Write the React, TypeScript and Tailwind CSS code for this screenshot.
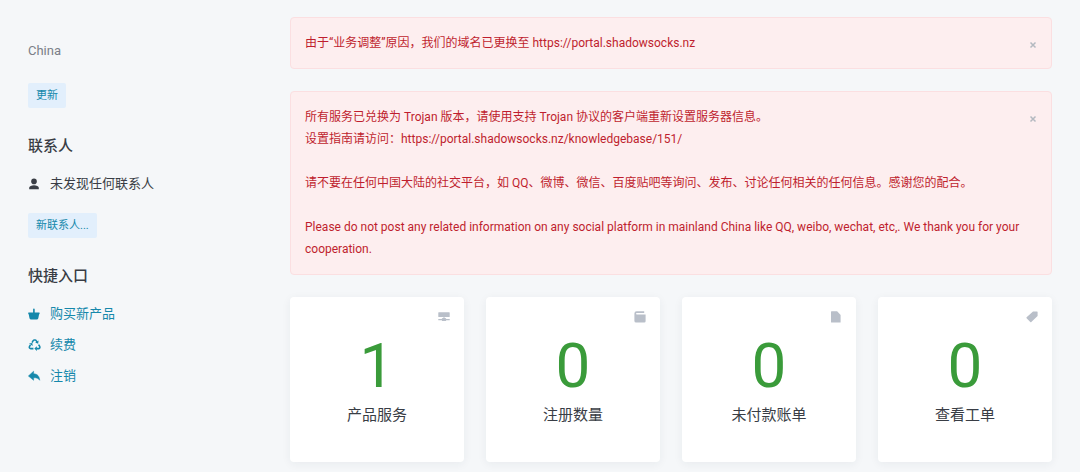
import React, { useState } from "react";

type IconProps = { className?: string };

const PersonIcon = ({ className }: IconProps) => (
  <svg viewBox="0 0 12 12" className={className} fill="currentColor" aria-hidden="true">
    <circle cx="6" cy="3.4" r="2.8" />
    <path d="M1.200 11.200V9.800C1.200 8 3.600 7.200 6 7.200s4.800.8 4.800 2.600v1.400z" />
  </svg>
);

const BasketIcon = ({ className }: IconProps) => (
  <svg viewBox="0 0 14 12" className={className} fill="currentColor" aria-hidden="true">
    <path d="M5.100 1.200a.8.8 0 0 1 1.600 0v3.300H11.200a.5.5 0 0 1 .5.6l-.3 1.200H.5L.1 5.100a.5.5 0 0 1 .5-.6h4.500zM.7 6.300h10.400l-.8 4a1.700 1.700 0 0 1-1.600 1.300H3.100a1.700 1.700 0 0 1-1.600-1.300z" />
  </svg>
);

const RecycleIcon = ({ className }: IconProps) => (
  <svg viewBox="0 0 14 13" className={className} fill="none" stroke="currentColor" strokeWidth="1.7" aria-hidden="true">
    <path d="M3.800 3.900 5 1.800Q5.500 1.100 6.300 1.100h.8q.8 0 1.200.7l.8 1.300" />
    <path d="m10.900 6 1.200 2.100q.5.900 0 1.600t-1.200.7H8.600" />
    <path d="M5.300 10.400H2.400q-1 0-1.400-.7t0-1.500l1-1.800" />
    <path d="m10.900 1.700-.5 3.500-3.200-1.400zM9 7.800v5.200L6.300 10.400zM.5 4.900l3.600-.6.4 3.400z" fill="currentColor" stroke="none" />
  </svg>
);

const ReplyIcon = ({ className }: IconProps) => (
  <svg viewBox="0 0 14 12" className={className} fill="currentColor" aria-hidden="true">
    <path d="M5.600 1.200v2.500c3.800.2 5.800 2.400 6.100 6.600C10.300 8.300 8.700 7.700 5.600 7.700v2.600L.4 6z" stroke="currentColor" strokeWidth=".5" strokeLinejoin="round" />
  </svg>
);

const ServerIcon = ({ className }: IconProps) => (
  <svg viewBox="0 0 12 12" className={className} fill="currentColor" aria-hidden="true">
    <path d="M.8 1.200h10.400a.500.500 0 0 1 .5.500v3.800a.500.500 0 0 1-.5.500H.8a.500.500 0 0 1-.5-.5V1.700a.500.500 0 0 1 .5-.5zM5.500 6h1v1.200h-1zM.3 7.900h3.400q.3-.9 1.200-.9h2.200q.9 0 1.200.9h3.400v1.300H8.300q-.3.9-1.200.9H4.900q-.9 0-1.200-.9H.3z" />
  </svg>
);

const WalletIcon = ({ className }: IconProps) => (
  <svg viewBox="0 0 12 12" className={className} fill="currentColor" aria-hidden="true">
    <path d="M2.600.3h7.600v1.700H2.900q-.9 0-.9.8t.9.8h8.700v6.700q0 1.300-1.300 1.300H2.100Q.4 11.600.4 10V2.500Q.4.3 2.600.3z" />
  </svg>
);

const FileIcon = ({ className }: IconProps) => (
  <svg viewBox="0 0 12 12" className={className} fill="currentColor" aria-hidden="true">
    <path d="M1.500.3h5.600l3.500 3.600v7.200q0 .5-.5.500H1.500q-.5 0-.5-.5V.8q0-.5.5-.5z" />
  </svg>
);

const TagIcon = ({ className }: IconProps) => (
  <svg viewBox="0 0 12 12" className={className} fill="currentColor" aria-hidden="true">
    <path d="M7 .4h4q.6 0 .6.600v4L5.300 11.100q-.5.5-1 0L.6 7.300q-.5-.5 0-1z" />
  </svg>
);

const Alert = ({ children }: { children: React.ReactNode }) => {
  const [open, setOpen] = useState(true);
  if (!open) return null;
  return (
    <div role="alert" className="flex items-start justify-between rounded border border-[#fbdfe1] bg-[#fdeeef] py-3.5 pr-[13px] pl-3.5 text-[12px] leading-[22px] text-[#bf1e2e]">
      <div className="min-w-0 flex-1 pr-1">{children}</div>
      <button type="button" aria-label="关闭" onClick={() => setOpen(false)} className="mt-2 flex size-2.5 items-center justify-center text-[#b4b9c0]">
        <svg viewBox="0 0 10 10" className="size-2.5" stroke="currentColor" strokeWidth="1.5" aria-hidden="true">
          <path d="m2.500 2.500 5 5m0-5-5 5" />
        </svg>
      </button>
    </div>
  );
};

const links = [
  { label: "购买新产品", Icon: BasketIcon },
  { label: "续费", Icon: RecycleIcon },
  { label: "注销", Icon: ReplyIcon },
];

const stats = [
  { value: 1, label: "产品服务", Icon: ServerIcon },
  { value: 0, label: "注册数量", Icon: WalletIcon },
  { value: 0, label: "未付款账单", Icon: FileIcon },
  { value: 0, label: "查看工单", Icon: TagIcon },
];

export default function App() {
  return (
    <div className="flex min-h-screen gap-[22px] bg-[#f5f7f9] px-7 font-[Roboto,'Noto_Sans_CJK_SC',sans-serif] text-[#393d45]">
      <aside className="flex w-60 shrink-0 flex-col items-start pt-[41px] text-[13px] leading-5">
        <p className="text-[#7b7f88]">China</p>
        <button type="button" className="mt-[22px] h-[25px] rounded-xs bg-[#e2effc] px-2 text-[11px] text-[#1588ab]">更新</button>

        <h2 className="mt-[26px] text-[15px] leading-6 font-medium">联系人</h2>
        <p className="mt-4 flex items-center gap-2.5">
          <PersonIcon className="size-3" />
          未发现任何联系人
        </p>
        <button type="button" className="mt-[19px] h-[25px] rounded-xs bg-[#e2effc] px-2 text-[11px] text-[#1588ab]">新联系人...</button>

        <h2 className="mt-[26px] text-[15px] leading-6 font-medium">快捷入口</h2>
        <nav className="mt-4 flex flex-col gap-[11px] text-[#1588ab]">
          {links.map(({ label, Icon }) => (
            <a key={label} href="#" className="flex items-center gap-2">
              <Icon className="h-3 w-3.5" />
              {label}
            </a>
          ))}
        </nav>
      </aside>

      <main className="flex min-w-0 flex-1 flex-col gap-[22px] pt-[17px]">
        <Alert>由于“业务调整”原因，我们的域名已更换至 https://portal.shadowsocks.nz</Alert>
        <Alert>
          <p>所有服务已兑换为 Trojan 版本，请使用支持 Trojan 协议的客户端重新设置服务器信息。</p>
          <p>设置指南请访问：https://portal.shadowsocks.nz/knowledgebase/151/</p>
          <br />
          <p>请不要在任何中国大陆的社交平台，如 QQ、微博、微信、百度贴吧等询问、发布、讨论任何相关的任何信息。感谢您的配合。</p>
          <br />
          <p>Please do not post any related information on any social platform in mainland China like QQ, weibo, wechat, etc,. We thank you for your cooperation.</p>
        </Alert>

        <section className="grid grid-cols-4 gap-[22px]">
          {stats.map(({ value, label, Icon }) => (
            <a key={label} href="#" className="flex flex-col rounded bg-white px-3.5 pt-3.5 pb-[35px] shadow-[0_2px_10px_rgba(40,50,70,0.06)]">
              <Icon className="size-3 self-end text-[#b9bfc9]" />
              <span className="mt-3 text-center text-[62px] leading-[62px] text-[#3a9b3a]">{value}</span>
              <span className="mt-1.5 text-center text-[15px] leading-6">{label}</span>
            </a>
          ))}
        </section>
      </main>
    </div>
  );
}
